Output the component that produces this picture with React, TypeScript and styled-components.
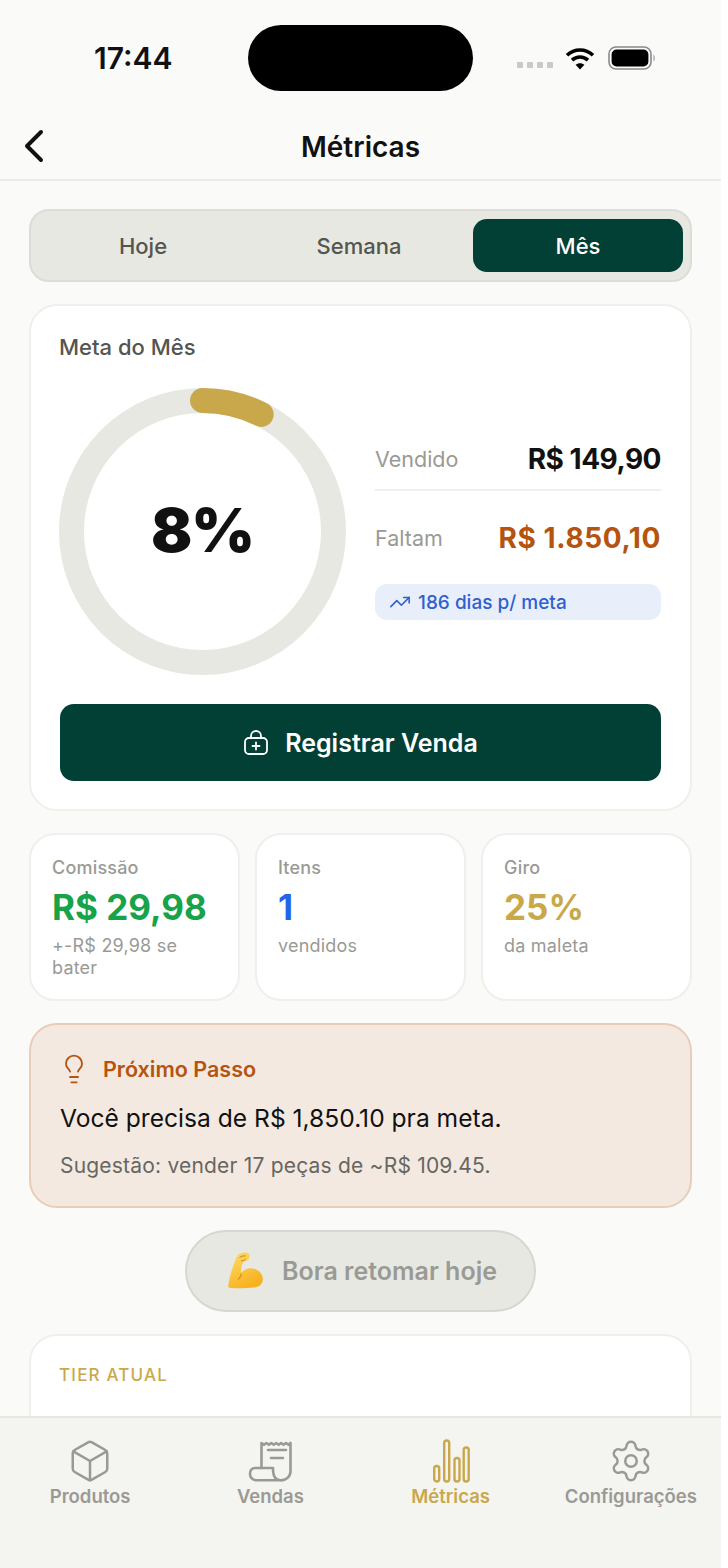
import styled, { createGlobalStyle } from "styled-components";
import { Box, ChevronLeft, Lightbulb, Settings, TrendingUp } from "lucide-react";

const GOLD = "#C9A84C";
const MUTED = "#9A9A95";
const GREEN = "#023F35";

const GlobalStyle = createGlobalStyle`
  * { box-sizing: border-box; }
  html, body { margin: 0; padding: 0; background: #ffffff; }
  body { font-family: Inter, "Liberation Sans", sans-serif; }
`;

function WifiIcon() {
  return (
    <svg width="30" height="23" viewBox="0 0 30 23" fill="none" stroke="#000" strokeWidth="3.6">
      <path d="M2 8.2C9.4 1.2 20.6 1.2 28 8.2" />
      <path d="M7 13.2C11.6 9 18.4 9 23 13.2" />
      <path d="M15 22.5L10.6 17.8C13 15.7 17 15.7 19.4 17.8Z" fill="#000" stroke="none" />
    </svg>
  );
}

function BatteryIcon() {
  return (
    <svg width="48" height="24" viewBox="0 0 48 24" fill="none">
      <rect x="1" y="1" width="42" height="22" rx="7" stroke="#8A8A8A" strokeWidth="1.6" />
      <rect x="3.6" y="3.6" width="36.8" height="16.8" rx="5" fill="#000" />
      <path d="M45.5 8.5C47.2 9.5 47.2 14.5 45.5 15.5Z" fill="#9A9A9A" />
    </svg>
  );
}

function BagPlusIcon() {
  return (
    <svg width="26" height="26" viewBox="0 0 26 26" fill="none" stroke="#fff" strokeWidth="1.8" strokeLinecap="round" strokeLinejoin="round">
      <rect x="2" y="8" width="22" height="16" rx="4" />
      <path d="M8 8V6a5 5 0 0 1 10 0v2" />
      <path d="M13 12.5v7M9.5 16h7" />
    </svg>
  );
}

function BicepsIcon() {
  return (
    <svg width="38" height="38" viewBox="0 0 38 38">
      <defs>
        <linearGradient id="arm" x1="0" y1="0" x2="0.5" y2="1">
          <stop offset="0" stopColor="#FFDC6A" />
          <stop offset="1" stopColor="#F6B21F" />
        </linearGradient>
      </defs>
      <path
        d="M9 6.5C10 3 13 .8 17 .6c2.800-.2 4.800.6 5.400 2.400.4 1.500-.3 3.600-1.400 4.700-1.300 1.300-3 1-4.200 1.800-1 .8-1.700 2.800-2.200 5-.5 2.300-.8 4.600-.4 6.200 2.400-2.700 6.400-4.600 10.600-4.300 6 .4 10.600 4.500 11 10.200.3 5-3.400 8.300-9 8.900-6.600.8-15.800 1-22.600.6C2 36 1 35 1.200 33.700 2.500 24.500 5.500 15 9 6.500Z"
        fill="url(#arm)"
      />
      <path d="M14 9c1.500-.4 3.500-.3 4.800-1.600M12.500 5.500c1.500-1.200 4-2 6-1.500" stroke="#C9821A" strokeWidth="1" fill="none" />
      <path d="M14.600 21.600c-.8 2.400-1.600 4.400-3.600 6" stroke="#D98E14" strokeWidth="1.200" fill="none" />
    </svg>
  );
}

function ReceiptIcon() {
  return (
    <svg width="44" height="42" viewBox="0 0 44 42" fill="none" stroke="currentColor" strokeWidth="2.6" strokeLinecap="round" strokeLinejoin="round">
      <path d="M13.500 28V3l2.500 1.800L18.400 3l2.500 1.800L23.300 3l2.500 1.800L28.200 3l2.500 1.800L33.100 3l2.500 1.800L38 3l2.500 1.800L42.500 3V31C42.500 36.500 38.500 40.200 33.500 40.200" />
      <path d="M33.500 40.200H8C4.200 40.200 2 37 2 34 2 30.500 4 28 7 28H25C25 31.500 25.200 35.500 27.200 37.800 28.800 39.600 31 40.200 33.500 40.200Z" />
      <path d="M20 10H38M23 18H35" />
    </svg>
  );
}

function BarsIcon() {
  return (
    <svg width="38" height="44" viewBox="0 0 38 44" fill="none" stroke="currentColor" strokeWidth="2.400">
      <rect x="2.200" y="27" width="5" height="15.500" rx="2.500" />
      <rect x="12.200" y="1.500" width="5" height="41" rx="2.500" />
      <rect x="22.500" y="19" width="5" height="23.500" rx="2.500" />
      <rect x="31.700" y="8.500" width="5" height="34" rx="2.500" />
    </svg>
  );
}

function ProgressRing({ percent }: { percent: number }) {
  const radius = 131;
  const circumference = 2 * Math.PI * radius;
  // round caps stick out past the end of the dash
  const arc = (circumference * percent) / 100 - 5;
  return (
    <RingWrap>
      <svg width="287" height="287" viewBox="0 0 287 287" fill="none">
        <circle cx="143.500" cy="143.500" r={radius} stroke="#E7E8E2" strokeWidth="25" />
        <circle
          cx="143.500"
          cy="143.500"
          r={radius}
          stroke={GOLD}
          strokeWidth="25"
          strokeLinecap="round"
          strokeDasharray={`${arc} ${circumference}`}
          transform="rotate(-90 143.500 143.500)"
        />
      </svg>
      <RingLabel>{percent}%</RingLabel>
    </RingWrap>
  );
}

const tabs = [
  { label: "Produtos", icon: <Box size={46} strokeWidth={1.3} /> },
  { label: "Vendas", icon: <ReceiptIcon /> },
  { label: "Métricas", icon: <BarsIcon />, active: true },
  { label: "Configurações", icon: <Settings size={46} strokeWidth={1.3} /> },
];

export default function App() {
  return (
    <>
      <GlobalStyle />
      <Screen>
        <StatusBar>
          <Clock>17:44</Clock>
          <Island />
          <StatusIcons>
            <SignalDots>
              <Dot />
              <Dot />
              <Dot />
              <Dot />
            </SignalDots>
            <WifiIcon />
            <BatteryIcon />
          </StatusIcons>
        </StatusBar>
        <Header>
          <BackButton>
            <ChevronLeft size={56} strokeWidth={1.7} />
          </BackButton>
          <Title>Métricas</Title>
        </Header>
        <Content>
          <Segmented>
            <Segment>Hoje</Segment>
            <Segment>Semana</Segment>
            <Segment $active>Mês</Segment>
          </Segmented>

          <GoalCard>
            <CardLabel>Meta do Mês</CardLabel>
            <GoalRow>
              <ProgressRing percent={8} />
              <GoalInfo>
                <SoldRow>
                  <InfoLabel>Vendido</InfoLabel>
                  <InfoValue $tracking={-0.5}>R$ 149,90</InfoValue>
                </SoldRow>
                <MissingRow>
                  <InfoLabel>Faltam</InfoLabel>
                  <InfoValue $color="#B5540F" $tracking={0.6}>R$ 1.850,10</InfoValue>
                </MissingRow>
                <DaysPill>
                  <TrendingUp size={22} strokeWidth={1.7} />
                  186 dias p/ meta
                </DaysPill>
              </GoalInfo>
            </GoalRow>
            <PrimaryButton>
              <BagPlusIcon />
              Registrar Venda
            </PrimaryButton>
          </GoalCard>

          <StatsRow>
            <StatCard>
              <StatLabel>Comissão</StatLabel>
              <StatValue $color="#16A34A">R$ 29,98</StatValue>
              <StatSub>+-R$ 29,98 se bater</StatSub>
            </StatCard>
            <StatCard>
              <StatLabel>Itens</StatLabel>
              <StatValue $color="#2563EB">1</StatValue>
              <StatSub>vendidos</StatSub>
            </StatCard>
            <StatCard>
              <StatLabel>Giro</StatLabel>
              <StatValue $color={GOLD}>25%</StatValue>
              <StatSub>da maleta</StatSub>
            </StatCard>
          </StatsRow>

          <TipCard>
            <TipHead>
              <Lightbulb size={32} strokeWidth={1.4} />
              Próximo Passo
            </TipHead>
            <TipText>Você precisa de R$ 1,850.10 pra meta.</TipText>
            <TipSub>Sugestão: vender 17 peças de ~R$ 109.45.</TipSub>
          </TipCard>

          <PillButton>
            <BicepsIcon />
            Bora retomar hoje
          </PillButton>

          <TierCard>
            <TierLabel>TIER ATUAL</TierLabel>
          </TierCard>
        </Content>
        <TabBar>
          {tabs.map((tab) => (
            <Tab key={tab.label} $active={tab.active}>
              <TabIcon>{tab.icon}</TabIcon>
              {tab.label}
            </Tab>
          ))}
        </TabBar>
      </Screen>
    </>
  );
}

const Screen = styled.div`
  width: 721px;
  height: 1568px;
  display: flex;
  flex-direction: column;
  overflow: hidden;
  background: #fafaf8;
  color: #111111;
`;

const StatusBar = styled.div`
  height: 112px;
  flex-shrink: 0;
  padding: 25px 0 0 94px;
  display: flex;
  align-items: flex-start;
`;

const Clock = styled.div`
  width: 154px;
  height: 66px;
  display: flex;
  align-items: center;
  font-size: 30px;
  font-weight: 600;
`;

const Island = styled.div`
  width: 225px;
  height: 66px;
  border-radius: 33px;
  background: #000000;
`;

const StatusIcons = styled.div`
  margin-left: 44px;
  height: 66px;
  display: flex;
  align-items: center;
  gap: 13px;
`;

const SignalDots = styled.div`
  display: flex;
  gap: 4px;
  margin-top: 14px;
  margin-right: -1px;
`;

const Dot = styled.span`
  width: 6px;
  height: 6px;
  border-radius: 1px;
  background: #c9c9c9;
`;

const Header = styled.div`
  height: 69px;
  flex-shrink: 0;
  position: relative;
  display: flex;
  align-items: center;
  justify-content: center;
  padding-top: 3px;
  border-bottom: 2px solid #ebebe7;
`;

const BackButton = styled.div`
  position: absolute;
  left: 6px;
  top: 6px;
  display: flex;
`;

const Title = styled.div`
  font-size: 28px;
  font-weight: 600;
`;

const Content = styled.div`
  flex: 1;
  min-height: 0;
  overflow: hidden;
  padding: 28px 29px 0;
  display: flex;
  flex-direction: column;
  gap: 22px;
`;

const Segmented = styled.div`
  height: 73px;
  flex-shrink: 0;
  padding: 8px 7px 8px 4px;
  display: grid;
  grid-template-columns: 1fr 1fr 1fr;
  background: #e7e8e2;
  border: 2px solid #dcddd6;
  border-radius: 20px;
`;

const Segment = styled.div<{ $active?: boolean }>`
  display: flex;
  align-items: center;
  justify-content: center;
  padding-top: 1px;
  margin-left: ${(p) => (p.$active ? "6px" : "0")};
  border-radius: 14px;
  font-size: 22px;
  font-weight: 500;
  color: ${(p) => (p.$active ? "#ffffff" : "#555550")};
  background: ${(p) => (p.$active ? GREEN : "transparent")};
`;

const GoalCard = styled.div`
  height: 507px;
  flex-shrink: 0;
  padding: 27px 29px 29px 28px;
  display: flex;
  flex-direction: column;
  background: #ffffff;
  border: 2px solid #efefeb;
  border-radius: 28px;
`;

const CardLabel = styled.div`
  font-size: 22px;
  font-weight: 500;
  line-height: 28px;
  color: #555550;
`;

const GoalRow = styled.div`
  margin-top: 27px;
  display: flex;
  align-items: flex-start;
  gap: 29px;
`;

const RingWrap = styled.div`
  position: relative;
  width: 287px;
  height: 287px;
  flex-shrink: 0;
  display: flex;
`;

const RingLabel = styled.div`
  position: absolute;
  inset: 0;
  padding-bottom: 4px;
  display: flex;
  align-items: center;
  justify-content: center;
  font-size: 61px;
  font-weight: 900;
  letter-spacing: -1px;
`;

const GoalInfo = styled.div`
  flex: 1;
  margin-top: 41px;
  display: flex;
  flex-direction: column;
`;

const InfoRow = styled.div`
  display: flex;
  align-items: center;
  justify-content: space-between;
`;

const SoldRow = styled(InfoRow)`
  height: 62px;
  border-bottom: 2px solid #efefeb;
`;

const MissingRow = styled(InfoRow)`
  height: 93px;
`;

const InfoLabel = styled.div`
  font-size: 21.5px;
  color: ${MUTED};
`;

const InfoValue = styled.div<{ $color?: string; $tracking: number }>`
  font-size: 28px;
  font-weight: 700;
  letter-spacing: ${(p) => p.$tracking}px;
  color: ${(p) => p.$color || "#111111"};
`;

const DaysPill = styled.div`
  height: 36px;
  padding: 0 14px;
  display: flex;
  align-items: center;
  gap: 7px;
  border-radius: 12px;
  background: #e8effb;
  color: #2f5fd0;
  font-size: 19px;
  font-weight: 500;
`;

const PrimaryButton = styled.div`
  margin: 29px 0 0 1px;
  height: 77px;
  flex-shrink: 0;
  display: flex;
  align-items: center;
  justify-content: center;
  gap: 16px;
  border-radius: 14px;
  background: ${GREEN};
  color: #ffffff;
  font-size: 25px;
  font-weight: 600;
`;

const StatsRow = styled.div`
  display: grid;
  grid-template-columns: repeat(3, 1fr);
  gap: 15px;
  flex-shrink: 0;
`;

const StatCard = styled.div`
  height: 168px;
  padding: 21px 21px;
  background: #ffffff;
  border: 2px solid #efefeb;
  border-radius: 26px;
`;

const StatLabel = styled.div`
  font-size: 18px;
  font-weight: 500;
  letter-spacing: 0.2px;
  line-height: 24px;
  color: ${MUTED};
`;

const StatValue = styled.div<{ $color: string }>`
  margin-top: 5px;
  font-size: 35px;
  font-weight: 700;
  line-height: 44px;
  color: ${(p) => p.$color};
`;

const StatSub = styled.div`
  margin-top: 6px;
  font-size: 18px;
  letter-spacing: 0.2px;
  line-height: 22px;
  color: ${MUTED};
`;

const TipCard = styled.div`
  height: 185px;
  flex-shrink: 0;
  padding: 28px 29px;
  background: #f4e9e1;
  border: 2px solid #e8cdb8;
  border-radius: 28px;
`;

const TipHead = styled.div`
  display: flex;
  align-items: center;
  gap: 13px;
  height: 32px;
  margin-left: -2px;
  color: #b5540f;
  font-size: 21.5px;
  font-weight: 600;
`;

const TipText = styled.div`
  margin-top: 16px;
  font-size: 24.6px;
  line-height: 34px;
`;

const TipSub = styled.div`
  margin-top: 17px;
  font-size: 21px;
  letter-spacing: 0.2px;
  line-height: 28px;
  color: #666661;
`;

const PillButton = styled.div`
  align-self: center;
  width: 351px;
  height: 82px;
  flex-shrink: 0;
  padding-left: 3px;
  display: flex;
  align-items: center;
  justify-content: center;
  gap: 17px;
  background: #e7e8e2;
  border: 2px solid #d6d7d0;
  border-radius: 41px;
  color: ${MUTED};
  font-size: 25px;
  font-weight: 600;
`;

const TierCard = styled.div`
  height: 200px;
  flex-shrink: 0;
  padding: 27px 28px;
  background: #ffffff;
  border: 2px solid #efefeb;
  border-radius: 28px;
`;

const TierLabel = styled.div`
  font-size: 17px;
  font-weight: 500;
  letter-spacing: 1.200px;
  line-height: 24px;
  color: ${GOLD};
`;

const TabBar = styled.div`
  height: 152px;
  flex-shrink: 0;
  padding-top: 19px;
  display: grid;
  grid-template-columns: repeat(4, 1fr);
  align-items: start;
  background: #f4f4f0;
  border-top: 2px solid #e7e8e2;
`;

const Tab = styled.div<{ $active?: boolean }>`
  display: flex;
  flex-direction: column;
  align-items: center;
  font-size: 18.500px;
  font-weight: 600;
  line-height: 24px;
  color: ${(p) => (p.$active ? GOLD : MUTED)};
`;

const TabIcon = styled.div`
  height: 47px;
  display: flex;
  align-items: center;
  justify-content: center;
`;
